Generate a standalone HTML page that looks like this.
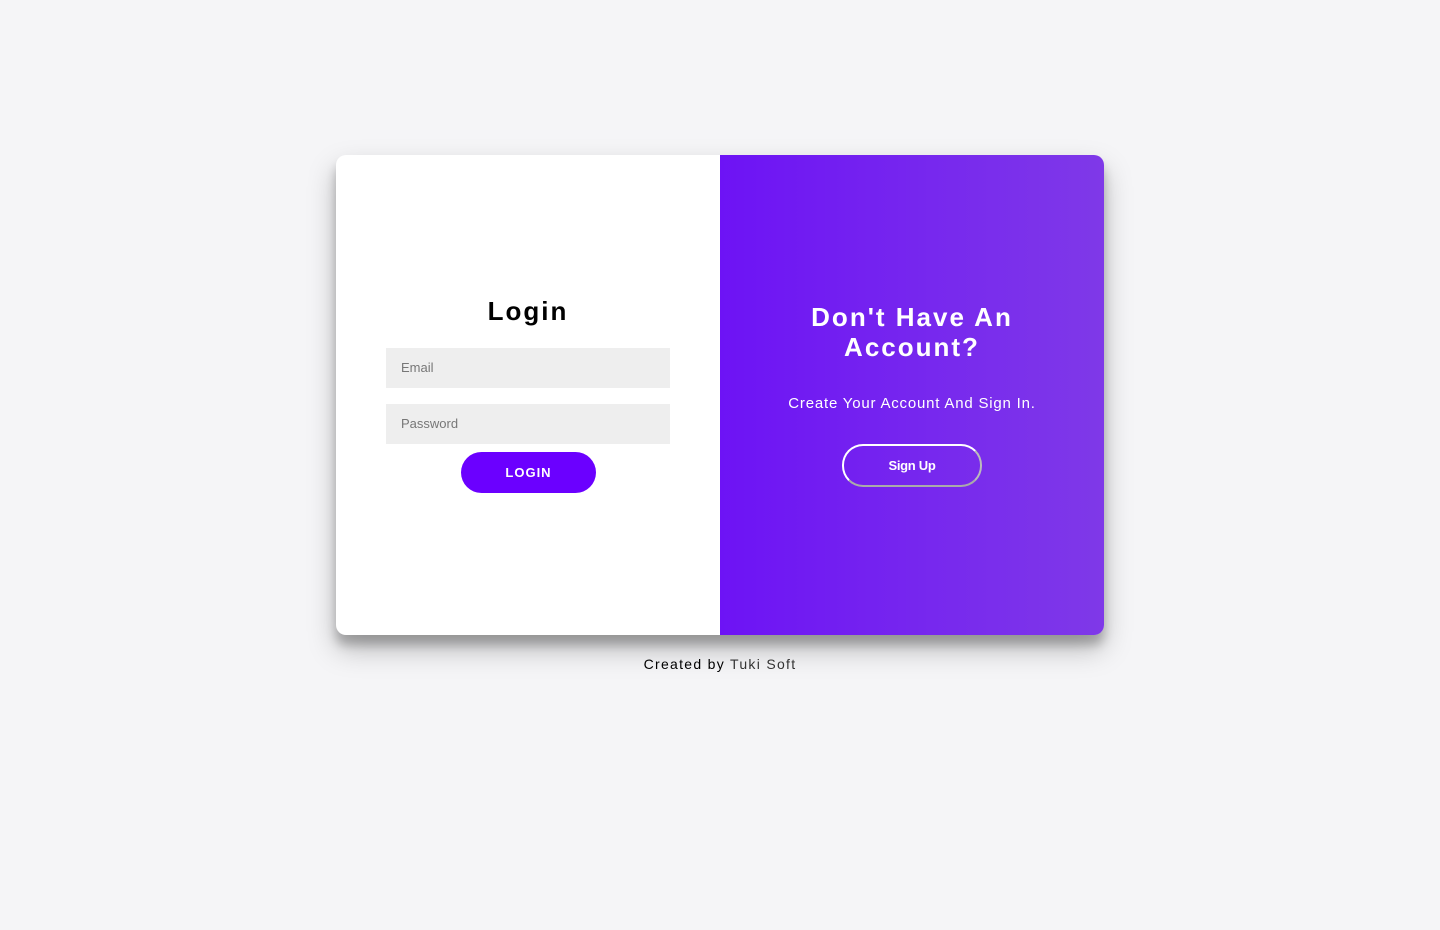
<!DOCTYPE html>
<html><head><style>
html,body{margin:0;padding:0;background:#f5f5f7;width:1440px;height:930px;overflow:hidden;font-family:"Liberation Sans",sans-serif}
.card{position:absolute;left:336px;top:155px;width:768px;height:480px;border-radius:10px;background:#fff;box-shadow:0 14px 28px rgba(0,0,0,.25),0 10px 10px rgba(0,0,0,.22);overflow:hidden}
.left{position:absolute;left:0;top:0;width:384px;height:480px}
.right{position:absolute;left:384px;top:0;width:384px;height:480px;background:linear-gradient(to right,#6d13f5,#7f39e8);color:#fff;text-align:center}
h1{margin:0;position:absolute;width:100%;text-align:center;font-size:26px;font-weight:bold;letter-spacing:2px}
.in{position:absolute;left:50px;width:284px;height:40px;background:#eee;font-size:13px;color:#777;line-height:40px;box-sizing:border-box;padding-left:15px}
.btn{position:absolute;left:125px;top:297px;width:135px;height:41px;border-radius:21px;background:#6b00ff;color:#fff;font-size:13px;font-weight:bold;letter-spacing:1px;text-align:center;line-height:41px}
.su{position:absolute;left:122px;top:289px;width:136px;height:39px;border:2px solid #ddd;border-color:#fff #bbb #aaa #fff;border-radius:21px;font-size:13px;font-weight:bold;line-height:39px;letter-spacing:-.3px}
.foot{position:absolute;top:656px;width:100%;text-align:center;font-size:14px;letter-spacing:1.3px;color:#000}
</style></head><body>
<div class="card">
<div class="left">
<h1 style="top:141px">Login</h1>
<div class="in" style="top:193px">Email</div>
<div class="in" style="top:249px">Password</div>
<div class="btn">LOGIN</div>
</div>
<div class="right">
<h1 style="top:147px;line-height:30px">Don't Have An<br>Account?</h1>
<div style="position:absolute;top:240px;width:100%;font-size:15px;letter-spacing:.8px">Create Your Account And Sign In.</div>
<div class="su">Sign Up</div>
</div>
</div>
<div class="foot">Created by <span style="color:#333">Tuki Soft</span></div>
</body></html>
